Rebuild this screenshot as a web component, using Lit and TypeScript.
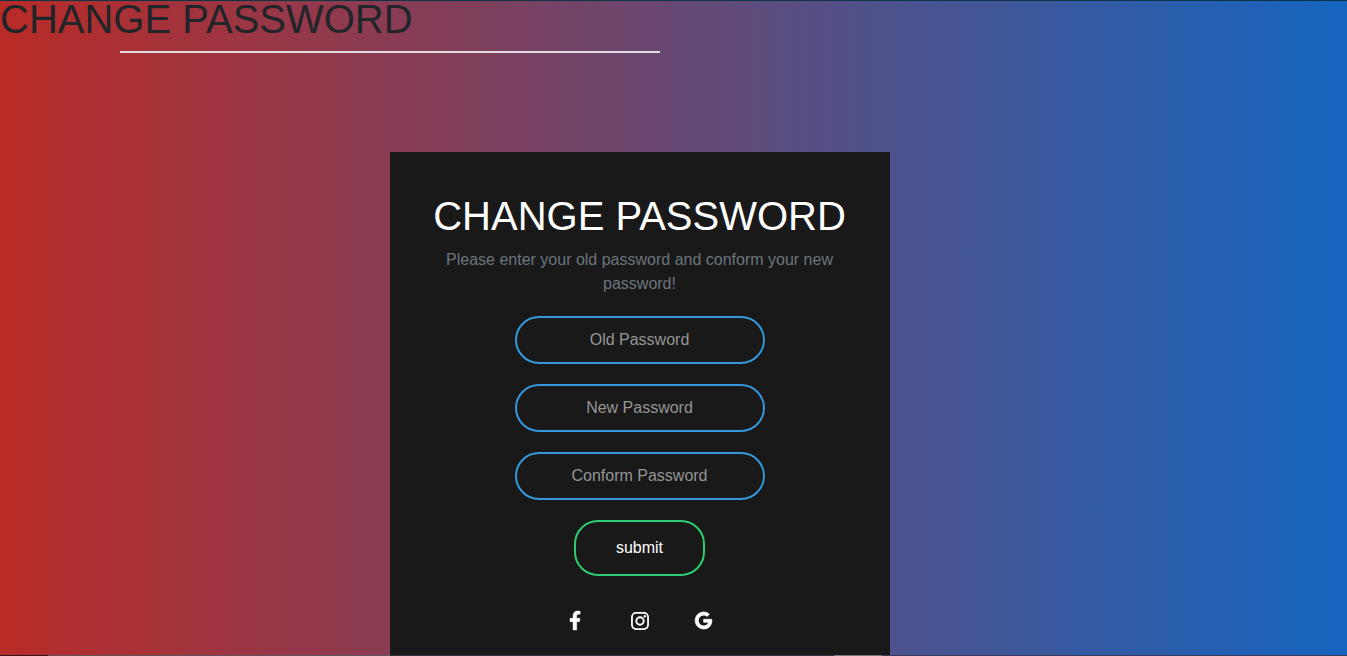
import { LitElement, html, css } from "lit";
import { customElement } from "lit/decorators.js";

const facebook = html`<svg viewBox="22.89 0 270.5 512" width="10" height="19" preserveAspectRatio="none">
  <path stroke="#fff" stroke-width="12" d="M279.14 288l14.22-92.66h-88.91v-60.13c0-25.35 12.42-50.06 52.24-50.06h40.42V6.26S260.43 0 225.36 0c-73.22 0-121.08 44.38-121.08 124.72v70.62H22.89V288h81.39v224h100.17V288z"/>
</svg>`;

const instagram = html`<svg viewBox="0 0 18 18" width="18" height="18">
  <rect x="0.95" y="0.95" width="16.1" height="16.1" rx="4.2" fill="none" stroke="#fff" stroke-width="1.8"/>
  <circle cx="9" cy="9" r="3.7" fill="none" stroke="#fff" stroke-width="1.9"/>
  <circle cx="13.8" cy="4.2" r="1.2"/>
</svg>`;

const google = html`<svg viewBox="0 8 488 496" width="17" height="17">
  <path stroke="#fff" stroke-width="20" d="M488 261.8C488 403.3 391.1 504 248 504 110.8 504 0 393.2 0 256S110.8 8 248 8c66.8 0 123 24.5 166.3 64.9l-67.5 64.9C258.5 52.6 94.3 116.6 94.3 256c0 86.5 69.1 156.6 153.7 156.6 98.2 0 135-70.4 140.8-106.9H248v-85.3h236.1c2.3 12.7 3.9 24.9 3.9 41.4z"/>
</svg>`;

@customElement("app-root")
export class AppRoot extends LitElement {
  static styles = css`
    :host {
      display: flex;
      flex-direction: column;
      box-sizing: border-box;
      height: 656px;
      font: 16px/24px "Liberation Sans", Arial, sans-serif;
      background: linear-gradient(to right, #b92b27, #1565c0);
    }
    * { box-sizing: border-box; }
    .edge { flex: none; height: 1px; background: #0b3444; }
    h1 { flex: none; margin: 0; font-size: 40px; line-height: 48px; font-weight: 400; }
    .title { line-height: 36px; color: #212529; }
    .rule { flex: none; width: 540px; height: 2px; margin: 14px 0 0 120px; background: #e3dcde; }
    .card {
      flex: 1;
      min-height: 0;
      width: 500px;
      margin: 99px 0 0 390px;
      padding: 40px 41px 0 40px;
      background: #191919;
      display: flex;
      flex-direction: column;
      align-items: center;
      text-align: center;
      overflow: hidden;
    }
    .card h1 { color: #fff; white-space: nowrap; }
    p { flex: none; margin: 8px 0 0; color: #6c757d; }
    input {
      flex: none;
      width: 250px;
      height: 48px;
      margin: 20px 0 0 1px;
      padding: 0 11px 0 10px;
      border: 2px solid #3498db;
      border-radius: 24px;
      background: none;
      color: #fff;
      font: inherit;
      text-align: center;
      outline: none;
    }
    input::placeholder { color: #959595; opacity: 1; }
    button {
      flex: none;
      width: 131px;
      height: 56px;
      margin-top: 20px;
      padding: 0;
      border: 2px solid #2ecc71;
      border-radius: 24px;
      background: none;
      color: #fff;
      font: inherit;
    }
    .social { flex: none; display: flex; gap: 14px; margin: 20px 0 0 1px; }
    .social a { display: flex; align-items: center; justify-content: center; width: 50px; height: 50px; }
    .social a:first-child { padding: 0 2px 1px 0; }
    .social a:last-child { padding: 0 1px 1px 0; }
    .social svg { display: block; fill: #fff; overflow: visible; }
    .bottom {
      flex: none;
      height: 1px;
      background: linear-gradient(to right, #301820 48px, #60545c 48px 390px, #3a333f 390px 834px, #777078 834px 882px, #39395c 882px);
    }
  `;

  render() {
    return html`
      <div class="edge"></div>
      <h1 class="title">CHANGE PASSWORD</h1>
      <div class="rule"></div>
      <form class="card" @submit=${(e: Event) => e.preventDefault()}>
        <h1>CHANGE PASSWORD</h1>
        <p>Please enter your old password and conform your new password!</p>
        ${["Old Password", "New Password", "Conform Password"].map(
          (label) => html`<input type="password" placeholder=${label} />`
        )}
        <button type="submit">submit</button>
        <div class="social">
          <a aria-label="Facebook">${facebook}</a>
          <a aria-label="Instagram">${instagram}</a>
          <a aria-label="Google">${google}</a>
        </div>
      </form>
      <div class="bottom"></div>
    `;
  }
}
